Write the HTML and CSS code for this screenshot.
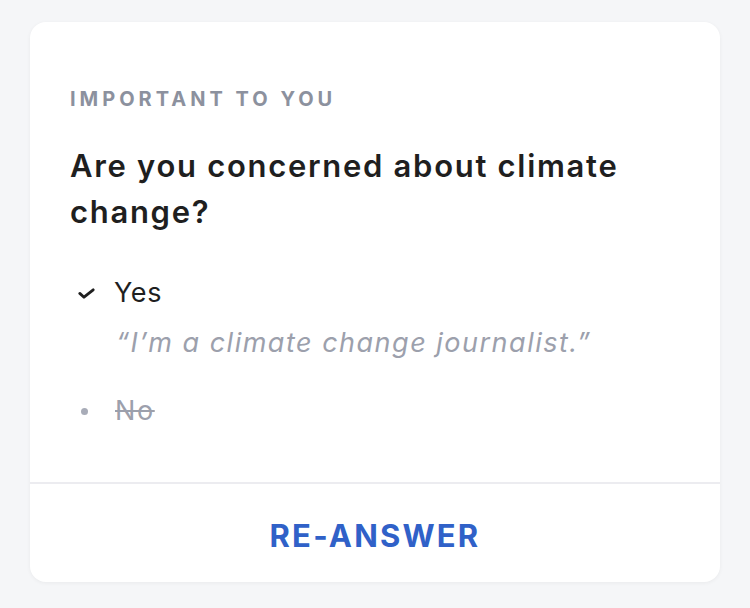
FILE: index.html
```html
<!DOCTYPE html>
<html>
<head>
<meta charset="utf-8">
<link rel="stylesheet" href="styles.css">
</head>
<body>
<div class="card">
  <div class="body">
    <div class="eyebrow">IMPORTANT TO YOU</div>
    <h1 class="question">Are you concerned about climate change?</h1>
    <ul class="answers">
      <li class="answer chosen">
        <span class="mark">
          <svg width="17" height="11" viewBox="0 0 17 11"><path d="M1.8 5.4 L6 9.2 L15.2 1.8" fill="none" stroke="#1f1f1f" stroke-width="2.8" stroke-linecap="round" stroke-linejoin="round"/></svg>
        </span>
        <div class="answer-text">
          <div class="label">Yes</div>
          <div class="note">“I’m a climate change journalist.”</div>
        </div>
      </li>
      <li class="answer other">
        <span class="mark"><span class="dot"></span></span>
        <div class="answer-text">
          <div class="label">No</div>
        </div>
      </li>
    </ul>
  </div>
  <div class="footer">RE-ANSWER</div>
</div>
</body>
</html>
```
FILE: styles.css
```css
html, body { margin: 0; padding: 0; }
body {
  background: #f5f6f8;
  font-family: Inter, "Noto Sans", sans-serif;
  padding: 22px 30px;
  height: 608px;
  box-sizing: border-box;
}
.card {
  background: #fff;
  border-radius: 16px;
  height: 560px;
  display: flex;
  flex-direction: column;
  box-shadow: 0 1px 4px rgba(0,0,0,0.05);
}
.body {
  padding: 40px 40px 0 40px;
  flex: 1;
}
.eyebrow {
  margin-top: 25px;
  font-size: 20px;
  font-weight: 700;
  letter-spacing: 4px;
  color: #8c919e;
  line-height: 24px;
}
.question {
  margin: 32px 0 0 0;
  font-size: 31px;
  font-weight: 600;
  letter-spacing: 1.7px;
  line-height: 46px;
  color: #1f1f1f;
}
.answers {
  list-style: none;
  margin: 40px 0 0 0;
  padding: 0;
}
.answer {
  display: flex;
  align-items: flex-start;
}
.mark {
  width: 44px;
  height: 36px;
  display: flex;
  align-items: center;
  padding-left: 8px;
  box-sizing: border-box;
}
.label {
  font-size: 27px;
  line-height: 36px;
  letter-spacing: 0.6px;
  color: #1f1f1f;
}
.note {
  font-size: 27px;
  font-style: italic;
  line-height: 36px;
  letter-spacing: 1.5px;
  margin-top: 14px;
  margin-left: 2px;
  color: #9ca0ac;
}
.other { margin-top: 32px; }
.other .label {
  color: #9ca0ac;
  letter-spacing: 1.6px;
  margin-left: 1px;
  text-decoration: line-through;
  text-decoration-thickness: 2px;
}
.dot {
  width: 7px;
  height: 7px;
  border-radius: 50%;
  background: #a8acb8;
  margin-left: 3px;
}
.footer {
  border-top: 2px solid #ececf0;
  height: 100px;
  box-sizing: border-box;
  padding-top: 32px;
  text-align: center;
  font-size: 31px;
  line-height: 40px;
  font-weight: 700;
  letter-spacing: 2.2px;
  color: #3061c8;
}
```
